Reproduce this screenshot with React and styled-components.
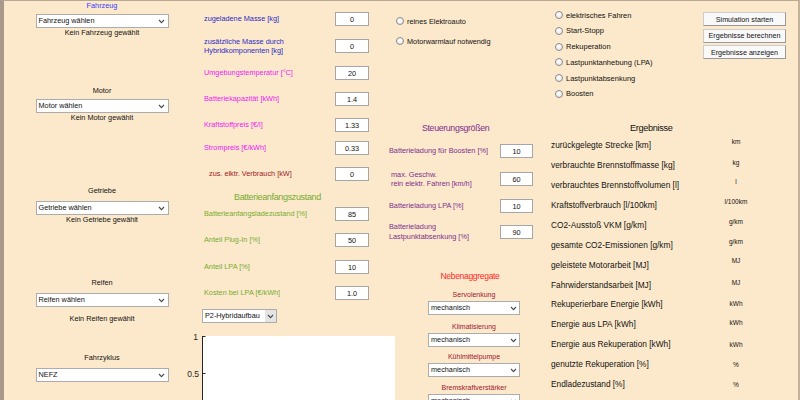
import React from "react";
import styled, { createGlobalStyle } from "styled-components";

const BG = "#fce9cb";

const GlobalStyle = createGlobalStyle`
  html, body {
    margin: 0;
    padding: 0;
    background: ${BG};
  }
  body {
    font-family: "Liberation Sans", Arial, sans-serif;
  }
`;

const vehicleParts = [
    { title: "Fahrzeug", color: "#3a3aff", value: "Fahrzeug wählen", note: "Kein Fahrzeug gewählt", top: 0, selTop: 3, noteTop: 0 },
    { title: "Motor", value: "Motor wählen", note: "Kein Motor gewählt", top: 49, selTop: 3, noteTop: 0 },
    { title: "Getriebe", value: "Getriebe wählen", note: "Kein Getriebe gewählt", top: 64, selTop: 5, noteTop: 0 },
    { title: "Reifen", value: "Reifen wählen", note: "Kein Reifen gewählt", top: 54, selTop: 5, noteTop: 7 },
    { title: "Fahrzyklus", value: "NEFZ", top: 30, selTop: 5 },
];

const BLUE = "#2a2ac4";
const MAGENTA = "#f020f0";
const GREEN = "#77ac30";
const PURPLE = "#7e2f8e";
const INK = "#111111";

const resultRows = [
    { label: "zurückgelegte Strecke [km]", unit: "km", dy: -3 },
    { label: "verbrauchte Brennstoffmasse [kg]", unit: "kg", dy: -2 },
    { label: "verbrauchtes Brennstoffvolumen [l]", unit: "l", dy: -3 },
    { label: "Kraftstoffverbrauch [l/100km]", unit: "l/100km", dy: -3 },
    { label: "CO2-Ausstoß VKM [g/km]", unit: "g/km", dy: -3 },
    { label: "gesamte CO2-Emissionen  [g/km]", unit: "g/km", dy: -3 },
    { label: "geleistete Motorarbeit [MJ]", unit: "MJ", dy: -4 },
    { label: "Fahrwiderstandsarbeit [MJ]", unit: "MJ", dy: -2 },
    { label: "Rekuperierbare Energie [kWh]", unit: "kWh", dy: 0 },
    { label: "Energie aus LPA [kWh]", unit: "kWh", dy: -1 },
    { label: "Energie aus Rekuperation [kWh]", unit: "kWh", dy: 1 },
    { label: "genutzte Rekuperation [%]", unit: "%", dy: 1 },
    { label: "Endladezustand [%]", unit: "%", dy: 1 },
];

const strategies = [
    "elektrisches Fahren",
    "Start-Stopp",
    "Rekuperation",
    "Lastpunktanhebung (LPA)",
    "Lastpunktabsenkung",
    "Boosten",
];

const auxUnits = [
    { label: "Servolenkung", top: 8 },
    { label: "Klimatisierung", top: 7 },
    { label: "Kühlmittelpumpe", top: 5 },
    { label: "Bremskraftverstärker", top: 6 },
];

function Chevron() {
    return (
        <svg width="7" height="5" viewBox="0 0 7 5">
            <polyline points="1,1 3.5,3.6 6,1" fill="none" stroke="#4a4a4a" strokeWidth="1.1" />
        </svg>
    );
}

function Dropdown({ value, width, gray, mt }) {
    return (
        <SelectBox $w={width} $mt={mt}>
            <SelectText>{value}</SelectText>
            <Arrow $gray={gray}>
                <Chevron />
            </Arrow>
        </SelectBox>
    );
}

function Radio({ label, size }) {
    return (
        <RadioRow $size={size}>
            <RadioDot />
            {label}
        </RadioRow>
    );
}

function Chart() {
    // leere Achse wie im Matlab-GUI
    return (
        <ChartSvg width="193" height="64" viewBox="0 0 193 64">
            <rect x="0" y="0" width="193" height="64" fill="#ffffff" />
            <line x1="0.5" y1="0" x2="0.5" y2="64" stroke="#262626" strokeWidth="1" />
            <line x1="0.5" y1="0.5" x2="3.5" y2="0.5" stroke="#262626" strokeWidth="1" />
            <line x1="0.5" y1="37.5" x2="3.5" y2="37.5" stroke="#262626" strokeWidth="1" />
            <text x="-4" y="3.6" textAnchor="end" fontSize="8.5" fill="#262626" fontFamily="Liberation Sans, Arial, sans-serif">1</text>
            <text x="-3" y="40.6" textAnchor="end" fontSize="8.5" fill="#262626" fontFamily="Liberation Sans, Arial, sans-serif">0.5</text>
        </ChartSvg>
    );
}

const App = () => {
    return (
        <>
            <GlobalStyle />
            <Window>
                {/* Komponentenauswahl */}
                <LeftCol>
                    {vehicleParts.map((p) => (
                        <React.Fragment key={p.title}>
                            <PartTitle $color={p.color} $mt={p.top}>{p.title}</PartTitle>
                            <Dropdown value={p.value} width={133} mt={p.selTop} />
                            {p.note && <Note $mt={p.noteTop}>{p.note}</Note>}
                        </React.Fragment>
                    ))}
                </LeftCol>

                {/* Parameter */}
                <ParamCol>
                    <Field $mt={11}>
                        <FieldLabel $color={BLUE}>zugeladene Masse [kg]</FieldLabel>
                        <NumInput $w={34} defaultValue="0" />
                    </Field>
                    <Field $mt={13}>
                        <FieldLabel $color={BLUE} $lh={9.4}>zusätzliche Masse durch<br />Hybridkomponenten [kg]</FieldLabel>
                        <NumInput $w={34} defaultValue="0" />
                    </Field>
                    <Field $mt={13}>
                        <FieldLabel $color={MAGENTA}>Umgebungstemperatur [°C]</FieldLabel>
                        <NumInput $w={34} defaultValue="20" />
                    </Field>
                    <Field $mt={12}>
                        <FieldLabel $color={MAGENTA}>Batteriekapazität [kWh]</FieldLabel>
                        <NumInput $w={34} defaultValue="1.4" />
                    </Field>
                    <Field $mt={12}>
                        <FieldLabel $color={MAGENTA}>Kraftstoffpreis [€/l]</FieldLabel>
                        <NumInput $w={34} defaultValue="1.33" />
                    </Field>
                    <Field $mt={9}>
                        <FieldLabel $color={MAGENTA}>Strompreis [€/kWh]</FieldLabel>
                        <NumInput $w={34} defaultValue="0.33" />
                    </Field>
                    <Field $mt={12}>
                        <FieldLabel $color="#a0201e" $indent={5}>zus. elktr. Verbrauch [kW]</FieldLabel>
                        <NumInput $w={34} defaultValue="0" />
                    </Field>
                    <GroupHeading $color={GREEN} $mt={10} $ml={34}>Batterieanfangszustand</GroupHeading>
                    <Field $mt={4}>
                        <FieldLabel $color={GREEN}>Batterieanfangsladezustand [%]</FieldLabel>
                        <NumInput $w={34} defaultValue="85" />
                    </Field>
                    <Field $mt={12}>
                        <FieldLabel $color={GREEN}>Anteil Plug-In [%]</FieldLabel>
                        <NumInput $w={34} defaultValue="50" />
                    </Field>
                    <Field $mt={13}>
                        <FieldLabel $color={GREEN}>Anteil LPA [%]</FieldLabel>
                        <NumInput $w={34} defaultValue="10" />
                    </Field>
                    <Field $mt={12}>
                        <FieldLabel $color={GREEN}>Kosten bei LPA [€/kWh]</FieldLabel>
                        <NumInput $w={34} defaultValue="1.0" />
                    </Field>
                    <Offset $ml={2} $mt={9}>
                        <Dropdown value="P2-Hybridaufbau" width={75} gray />
                    </Offset>
                    <Offset $ml={2} $mt={13}>
                        <Chart />
                    </Offset>
                </ParamCol>

                {/* Steuerung */}
                <ControlCol>
                    <RadioGroup $ml={11} $mt={15} $gap={10}>
                        <Radio label="reines Elektroauto" />
                        <Radio label="Motorwarmlauf notwendig" />
                    </RadioGroup>
                    <GroupHeading $color={PURPLE} $mt={76} $ml={37} $size={8.8}>Steuerungsgrößen</GroupHeading>
                    <Field $mt={10}>
                        <FieldLabel $color={PURPLE}>Batterieladung für Boosten [%]</FieldLabel>
                        <NumInput $w={33} defaultValue="10" />
                    </Field>
                    <Field $mt={14}>
                        <FieldLabel $color={PURPLE} $indent={2} $lh={9}>max. Geschw.<br />rein elektr. Fahren [km/h]</FieldLabel>
                        <NumInput $w={33} defaultValue="60" />
                    </Field>
                    <Field $mt={13}>
                        <FieldLabel $color={PURPLE}>Batterieladung LPA [%]</FieldLabel>
                        <NumInput $w={33} defaultValue="10" />
                    </Field>
                    <Field $mt={12}>
                        <FieldLabel $color={PURPLE} $lh={10.4}>Batterieladung<br />Lastpunktabsenkung [%]</FieldLabel>
                        <NumInput $w={33} defaultValue="90" />
                    </Field>
                    <AuxBlock>
                        <AuxHeading>Nebenaggregate</AuxHeading>
                        {auxUnits.map((a) => (
                            <React.Fragment key={a.label}>
                                <AuxLabel $mt={a.top}>{a.label}</AuxLabel>
                                <Dropdown value="mechanisch" width={92} mt={2} />
                            </React.Fragment>
                        ))}
                    </AuxBlock>
                </ControlCol>

                {/* Strategien + Ergebnisse */}
                <ResultCol>
                    <TopRow>
                        <RadioGroup $ml={4} $mt={9} $gap={5.8}>
                            {strategies.map((s) => (
                                <Radio key={s} label={s} size={7.5} />
                            ))}
                        </RadioGroup>
                        <ButtonStack>
                            <ActionButton>Simulation starten</ActionButton>
                            <ActionButton>Ergebnisse berechnen</ActionButton>
                            <ActionButton>Ergebnisse anzeigen</ActionButton>
                        </ButtonStack>
                    </TopRow>
                    <GroupHeading $color={INK} $mt={23} $ml={79} $size={9.2}>Ergebnisse</GroupHeading>
                    <ResultList>
                        {resultRows.map((r) => (
                            <ResultRow key={r.label}>
                                <ResultLabel>{r.label}</ResultLabel>
                                <Unit $dy={r.dy}>{r.unit}</Unit>
                            </ResultRow>
                        ))}
                    </ResultList>
                </ResultCol>
            </Window>
        </>
    );
};

const Window = styled.div`
    width: 800px;
    height: 400px;
    box-sizing: border-box;
    display: flex;
    align-items: flex-start;
    background: ${BG};
    border-left: 4px solid #a8998a;
    border-top: 1px solid #bba894;
    border-right: 2px solid #c4b29b;
    overflow: hidden;
    color: ${INK};
    font-family: "Liberation Sans", Arial, sans-serif;
    font-size: 7.3px;
`;

const Column = styled.div`
    display: flex;
    flex-direction: column;
    flex-shrink: 0;
    box-sizing: border-box;
`;

const LeftCol = styled(Column)`
    width: 196px;
    align-items: center;
`;

const ParamCol = styled(Column)`
    width: 180px;
    padding-right: 11px;
`;

const ControlCol = styled(Column)`
    width: 160px;
    padding-left: 5px;
    padding-right: 7px;
`;

const ResultCol = styled(Column)`
    flex: 1;
    padding-left: 11px;
`;

const PartTitle = styled.div`
    margin-top: ${(p) => p.$mt}px;
    line-height: 10px;
    height: 10px;
    color: ${(p) => p.$color || INK};
    font-size: 7.3px;
`;

const Note = styled.div`
    margin-top: ${(p) => p.$mt}px;
    line-height: 9px;
    height: 9px;
    font-size: 7.3px;
    color: ${INK};
`;

const SelectBox = styled.div`
    width: ${(p) => p.$w}px;
    height: 14px;
    margin-top: ${(p) => p.$mt || 0}px;
    box-sizing: border-box;
    display: flex;
    align-items: stretch;
    background: #ffffff;
    border: 1px solid #acacac;
    font-size: 7.3px;
    color: ${INK};
`;

const SelectText = styled.span`
    flex: 1;
    padding-left: 2px;
    line-height: 12px;
    white-space: nowrap;
    overflow: hidden;
`;

const Arrow = styled.span`
    width: ${(p) => (p.$gray ? 11 : 12)}px;
    display: flex;
    align-items: center;
    justify-content: center;
    background: ${(p) => (p.$gray ? "#e4e4e4" : "#ffffff")};
`;

const Field = styled.div`
    display: flex;
    align-items: center;
    height: 14px;
    margin-top: ${(p) => p.$mt}px;
`;

const FieldLabel = styled.div`
    flex: 1;
    padding-left: ${(p) => 4 + (p.$indent || 0)}px;
    color: ${(p) => p.$color};
    line-height: ${(p) => p.$lh || 10}px;
    white-space: nowrap;
`;

const NumInput = styled.input`
    width: ${(p) => p.$w}px;
    height: 14px;
    box-sizing: border-box;
    flex-shrink: 0;
    padding: 0;
    margin: 0;
    border: 1px solid #a6a6a6;
    background: #ffffff;
    text-align: center;
    font-family: inherit;
    font-size: 7.3px;
    color: ${INK};
    outline: none;
`;

const GroupHeading = styled.div`
    margin-top: ${(p) => p.$mt}px;
    margin-left: ${(p) => p.$ml}px;
    height: 12px;
    line-height: 12px;
    color: ${(p) => p.$color};
    font-size: ${(p) => p.$size || 9}px;
    letter-spacing: -0.35px;
    white-space: nowrap;
`;

const Offset = styled.div`
    margin-left: ${(p) => p.$ml}px;
    margin-top: ${(p) => p.$mt}px;
`;

const ChartSvg = styled.svg`
    display: block;
    overflow: visible;
`;

const RadioGroup = styled.div`
    display: flex;
    flex-direction: column;
    gap: ${(p) => p.$gap}px;
    margin-left: ${(p) => p.$ml}px;
    margin-top: ${(p) => p.$mt}px;
`;

const RadioRow = styled.label`
    display: flex;
    align-items: center;
    gap: 3px;
    height: 10px;
    font-size: ${(p) => p.$size || 7.3}px;
    color: ${INK};
    white-space: nowrap;
`;

const RadioDot = styled.span`
    width: 8px;
    height: 8px;
    flex-shrink: 0;
    box-sizing: border-box;
    border-radius: 50%;
    border: 1px solid #8a8a8a;
    background: radial-gradient(circle at 40% 35%, #ffffff 0%, #f0f0f0 60%, #d6d6d6 100%);
`;

const AuxBlock = styled.div`
    margin-left: 43px;
    margin-top: 31px;
    width: 92px;
    display: flex;
    flex-direction: column;
    align-items: center;
`;

const AuxHeading = styled.div`
    height: 12px;
    line-height: 12px;
    padding-right: 8px;
    color: #ff2a2a;
    font-size: 8.6px;
    letter-spacing: -0.35px;
`;

const AuxLabel = styled.div`
    margin-top: ${(p) => p.$mt}px;
    height: 9px;
    line-height: 9px;
    font-size: 7px;
    color: #a2142f;
`;

const TopRow = styled.div`
    display: flex;
    align-items: flex-start;
`;

const ButtonStack = styled.div`
    margin-left: auto;
    margin-right: 12px;
    margin-top: 11px;
    width: 83px;
    display: flex;
    flex-direction: column;
    gap: 2.7px;
`;

const ActionButton = styled.button`
    height: 14px;
    padding: 0;
    box-sizing: border-box;
    background: #f9f9f9;
    border: 1px solid #cdcdcd;
    border-right-color: #999;
    border-bottom-color: #999;
    font-family: inherit;
    font-size: 7.2px;
    color: ${INK};
`;

const ResultList = styled.div`
    margin-top: 1px;
    display: flex;
    flex-direction: column;
`;

const ResultRow = styled.div`
    display: flex;
    align-items: flex-start;
    height: 19.95px;
`;

const ResultLabel = styled.div`
    width: 165px;
    line-height: 20px;
    font-size: 8.3px;
    color: ${INK};
    white-space: nowrap;
`;

const Unit = styled.div`
    width: 40px;
    margin-top: ${(p) => 6 + p.$dy}px;
    line-height: 8px;
    text-align: center;
    font-size: 6.5px;
    color: ${INK};
`;

export default App;
